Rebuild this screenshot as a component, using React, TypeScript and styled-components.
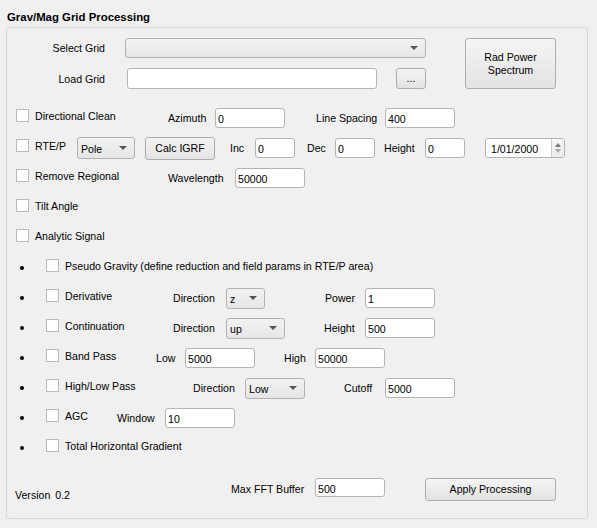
import React from 'react';
import styled, { createGlobalStyle } from 'styled-components';

const Global = createGlobalStyle`
  html, body { margin: 0; padding: 0; background: #f0f0f0; }
  body { font-family: "Liberation Sans", Arial, sans-serif; font-size: 10.6px; color: #000; }
  * { box-sizing: border-box; }
`;

type Box = { $ml?: number; $w?: number; $h?: number; $mt?: number };

const Page = styled.div`
  width: 597px;
  height: 528px;
  background: #f0f0f0;
  overflow: hidden;
`;

const Title = styled.div`
  height: 27px;
  padding: 10px 0 3px 7px;
  line-height: 14px;
  font-size: 11.4px;
  font-weight: bold;
`;

const Group = styled.div`
  margin-left: 6px;
  width: 582px;
  height: 492px;
  border: 1px solid #d6d6d6;
  border-radius: 3px;
  padding-top: 10px;
  display: flex;
  flex-direction: column;
`;

const Top = styled.div`
  display: flex;
  height: 51px;
  margin-bottom: 14px;
`;

const TopCol = styled.div`
  display: flex;
  flex-direction: column;
  gap: 10px;
`;

const TopRow = styled.div<Box>`
  display: flex;
  align-items: center;
  height: ${p => p.$h ?? 20}px;
`;

const TopLabel = styled.div`
  width: 98px;
  text-align: right;
  white-space: nowrap;
`;

const Row = styled.div`
  display: flex;
  align-items: center;
  height: 30px;
`;

const Bottom = styled.div`
  display: flex;
  align-items: flex-start;
  margin-top: 15px;
`;

const Label = styled.span<Box>`
  display: block;
  flex: none;
  margin-left: ${p => p.$ml ?? 0}px;
  margin-top: ${p => p.$mt ?? 0}px;
  width: ${p => (p.$w ? `${p.$w}px` : 'auto')};
  white-space: nowrap;
  line-height: 14px;
`;

const Version = styled(Label)`
  word-spacing: 2px;
`;

const Field = styled.input<Box>`
  flex: none;
  margin: 0 0 0 ${p => p.$ml ?? 0}px;
  width: ${p => p.$w ?? 70}px;
  height: ${p => p.$h ?? 20}px;
  border: 1px solid #b4b4b4;
  border-radius: 3px;
  background: #fff;
  font: inherit;
  color: #000;
  padding: 2px 2px 0;
  outline: none;
`;

const Btn = styled.button<Box>`
  flex: none;
  margin: 0 0 0 ${p => p.$ml ?? 0}px;
  width: ${p => p.$w ?? 70}px;
  height: ${p => p.$h ?? 23}px;
  border: 1px solid #adadad;
  border-radius: 3px;
  background: linear-gradient(#f4f4f4, #e3e3e3);
  font: inherit;
  color: #000;
  line-height: 13px;
  padding: 0 4px;
  text-align: center;
`;

const Combo = styled.div<Box>`
  flex: none;
  position: relative;
  display: flex;
  align-items: center;
  margin-left: ${p => p.$ml ?? 0}px;
  width: ${p => p.$w ?? 60}px;
  height: ${p => p.$h ?? 21}px;
  border: 1px solid #b1b1b1;
  border-radius: 3px;
  background: linear-gradient(#f2f2f2, #e6e6e6);
  padding: 2px 0 0 3px;
  &::after {
    content: '';
    position: absolute;
    right: 7px;
    top: 50%;
    margin-top: -2px;
    border-left: 4px solid transparent;
    border-right: 4px solid transparent;
    border-top: 4px solid #555;
  }
`;

const Spin = styled.div<Box>`
  flex: none;
  display: flex;
  margin-left: ${p => p.$ml ?? 0}px;
  width: ${p => p.$w ?? 80}px;
  height: 20px;
  border: 1px solid #b4b4b4;
  border-radius: 3px;
  background: #fff;
  overflow: hidden;
`;

const SpinText = styled.div`
  flex: 1;
  padding: 3px 0 0 5px;
  line-height: 14px;
`;

const SpinArrows = styled.div`
  width: 13px;
  border-left: 1px solid #c8c8c8;
  background: linear-gradient(#f6f6f6, #ebebeb);
  display: flex;
  flex-direction: column;
  align-items: center;
  justify-content: center;
  gap: 2px;
`;

const Tri = styled.span<{ $up?: boolean }>`
  width: 0;
  height: 0;
  border-left: 3.5px solid transparent;
  border-right: 3.5px solid transparent;
  ${p => (p.$up ? 'border-bottom: 4px solid #777;' : 'border-top: 4px solid #aaa;')}
`;

const CheckWrap = styled.label<Box>`
  flex: none;
  display: flex;
  align-items: center;
  gap: 6px;
  margin-left: ${p => p.$ml ?? 0}px;
  margin-top: -5px;
  width: ${p => (p.$w ? `${p.$w}px` : 'auto')};
  white-space: nowrap;
  line-height: 14px;
`;

const CheckBox = styled.span`
  flex: none;
  width: 13px;
  height: 13px;
  border: 1px solid #bababa;
  background: #fff;
`;

const Bullet = styled.span`
  flex: none;
  margin-left: 13px;
  width: 4px;
  height: 4px;
  border-radius: 50%;
  background: #000;
`;

const Check: React.FC<{ ml?: number; w?: number; children: React.ReactNode }> = ({ ml, w, children }) => (
  <CheckWrap $ml={ml} $w={w}>
    <CheckBox />
    <span>{children}</span>
  </CheckWrap>
);

export default function App() {
  return (
    <Page>
      <Global />
      <Title>Grav/Mag Grid Processing</Title>
      <Group>
        <Top>
          <TopCol>
            <TopRow $h={20}>
              <TopLabel>Select Grid</TopLabel>
              <Combo $ml={20} $w={301} $h={20} />
            </TopRow>
            <TopRow $h={21}>
              <TopLabel>Load Grid</TopLabel>
              <Field $ml={22} $w={250} $h={21} defaultValue="" />
              <Btn $ml={19} $w={30} $h={21}>...</Btn>
            </TopRow>
          </TopCol>
          <Btn $ml={39} $w={91} $h={51}>
            Rad Power
            <br />
            Spectrum
          </Btn>
        </Top>

        <Row>
          <Check ml={9} w={152}>Directional Clean</Check>
          <Label $w={47}>Azimuth</Label>
          <Field $w={70} defaultValue="0" />
          <Label $ml={31} $w={69}>Line Spacing</Label>
          <Field $w={70} defaultValue="400" />
        </Row>

        <Row>
          <Check ml={9} w={61}>RTE/P</Check>
          <Combo $w={58} $h={22}>Pole</Combo>
          <Btn $ml={10} $w={70} $h={23}>Calc IGRF</Btn>
          <Label $ml={15} $w={25}>Inc</Label>
          <Field $w={40} defaultValue="0" />
          <Label $ml={12} $w={28}>Dec</Label>
          <Field $w={40} defaultValue="0" />
          <Label $ml={9} $w={41}>Height</Label>
          <Field $w={40} defaultValue="0" />
          <Spin $ml={20} $w={80}>
            <SpinText>1/01/2000</SpinText>
            <SpinArrows>
              <Tri $up />
              <Tri />
            </SpinArrows>
          </Spin>
        </Row>

        <Row>
          <Check ml={9} w={152}>Remove Regional</Check>
          <Label $w={67}>Wavelength</Label>
          <Field $w={70} defaultValue="50000" />
        </Row>

        <Row>
          <Check ml={9}>Tilt Angle</Check>
        </Row>

        <Row>
          <Check ml={9}>Analytic Signal</Check>
        </Row>

        <Row>
          <Bullet />
          <Check ml={22}>Pseudo Gravity (define reduction and field params in RTE/P area)</Check>
        </Row>

        <Row>
          <Bullet />
          <Check ml={22} w={127}>Derivative</Check>
          <Label $w={53}>Direction</Label>
          <Combo $w={39} $h={21}>z</Combo>
          <Label $ml={60} $w={40}>Power</Label>
          <Field $w={70} defaultValue="1" />
        </Row>

        <Row>
          <Bullet />
          <Check ml={22} w={127}>Continuation</Check>
          <Label $w={53}>Direction</Label>
          <Combo $w={59} $h={21}>up</Combo>
          <Label $ml={39} $w={41}>Height</Label>
          <Field $w={70} defaultValue="500" />
        </Row>

        <Row>
          <Bullet />
          <Check ml={22} w={110}>Band Pass</Check>
          <Label $w={29}>Low</Label>
          <Field $w={70} defaultValue="5000" />
          <Label $ml={29} $w={31}>High</Label>
          <Field $w={70} defaultValue="50000" />
        </Row>

        <Row>
          <Bullet />
          <Check ml={22} w={147}>High/Low Pass</Check>
          <Label $w={52}>Direction</Label>
          <Combo $w={60} $h={21}>Low</Combo>
          <Label $ml={39} $w={41}>Cutoff</Label>
          <Field $w={70} defaultValue="5000" />
        </Row>

        <Row>
          <Bullet />
          <Check ml={22} w={71}>AGC</Check>
          <Label $w={48}>Window</Label>
          <Field $w={70} defaultValue="10" />
        </Row>

        <Row>
          <Bullet />
          <Check ml={22}>Total Horizontal Gradient</Check>
        </Row>

        <Bottom>
          <Version $ml={8} $w={216} $mt={10}>Version 0.2</Version>
          <Label $w={84} $mt={4}>Max FFT Buffer</Label>
          <Field $w={70} $h={19} defaultValue="500" />
          <Btn $ml={40} $w={131} $h={23}>Apply Processing</Btn>
        </Bottom>
      </Group>
    </Page>
  );
}
